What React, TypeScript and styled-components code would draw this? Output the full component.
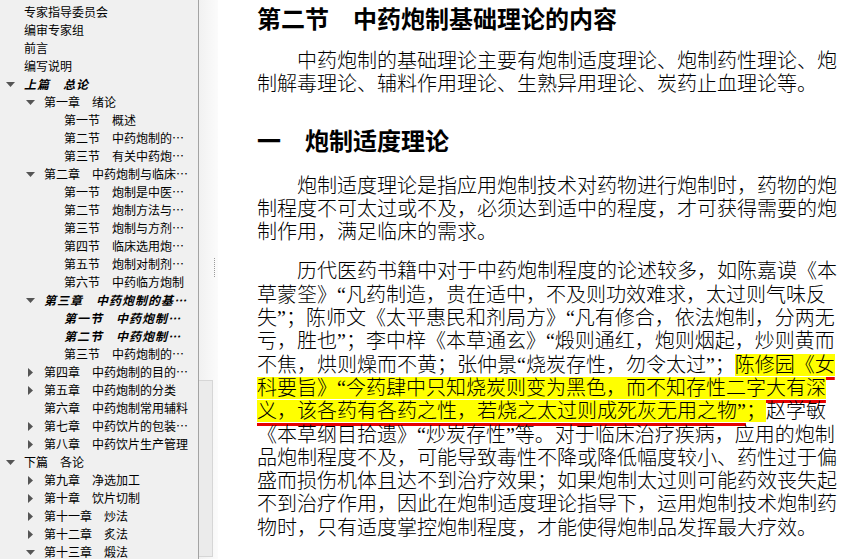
import React from 'react';
import styled, { createGlobalStyle } from 'styled-components';

const GlobalStyle = createGlobalStyle`
  html, body {
    margin: 0;
    padding: 0;
    background: #fff;
  }
  body {
    overflow: hidden;
  }
`;

type TocNode = {
  level: number;
  label: string;
  arrow?: 'open' | 'closed';
  current?: boolean;
};

const toc: TocNode[] = [
  { level: 0, label: '专家指导委员会' },
  { level: 0, label: '编审专家组' },
  { level: 0, label: '前言' },
  { level: 0, label: '编写说明' },
  { level: 0, label: '上篇　总论', arrow: 'open', current: true },
  { level: 1, label: '第一章　绪论', arrow: 'open' },
  { level: 2, label: '第一节　概述' },
  { level: 2, label: '第二节　中药炮制的…' },
  { level: 2, label: '第三节　有关中药炮…' },
  { level: 1, label: '第二章　中药炮制与临床…', arrow: 'open' },
  { level: 2, label: '第一节　炮制是中医…' },
  { level: 2, label: '第二节　炮制方法与…' },
  { level: 2, label: '第三节　炮制与方剂…' },
  { level: 2, label: '第四节　临床选用炮…' },
  { level: 2, label: '第五节　炮制对制剂…' },
  { level: 2, label: '第六节　中药临方炮制' },
  { level: 1, label: '第三章　中药炮制的基…', arrow: 'open', current: true },
  { level: 2, label: '第一节　中药炮制…', current: true },
  { level: 2, label: '第二节　中药炮制…', current: true },
  { level: 2, label: '第三节　中药炮制的…' },
  { level: 1, label: '第四章　中药炮制的目的…', arrow: 'closed' },
  { level: 1, label: '第五章　中药炮制的分类', arrow: 'closed' },
  { level: 1, label: '第六章　中药炮制常用辅料' },
  { level: 1, label: '第七章　中药饮片的包装…', arrow: 'closed' },
  { level: 1, label: '第八章　中药饮片生产管理', arrow: 'closed' },
  { level: 0, label: '下篇　各论', arrow: 'open' },
  { level: 1, label: '第九章　净选加工', arrow: 'closed' },
  { level: 1, label: '第十章　饮片切制', arrow: 'closed' },
  { level: 1, label: '第十一章　炒法', arrow: 'closed' },
  { level: 1, label: '第十二章　炙法', arrow: 'closed' },
  { level: 1, label: '第十三章　煅法', arrow: 'open' },
];

const Arrow = ({ kind }: { kind: 'open' | 'closed' }) =>
  kind === 'open' ? (
    <svg width="9" height="5" viewBox="0 0 9 5">
      <polygon points="0,0 9,0 4.5,5" fill="#555" />
    </svg>
  ) : (
    <svg width="5" height="9" viewBox="0 0 5 9">
      <polygon points="0,0 5,4.5 0,9" fill="#555" />
    </svg>
  );

const App = () => {
  return (
    <Shell>
      <GlobalStyle />
      <Sidebar>
        {toc.map((node, i) => (
          <TreeRow key={i} $level={node.level}>
            <Twisty>{node.arrow && <Arrow kind={node.arrow} />}</Twisty>
            <Label $current={node.current}>{node.label}</Label>
          </TreeRow>
        ))}
      </Sidebar>
      <Splitter>
        <Grip />
        <Thumb />
      </Splitter>
      <Page>
        <Title>第二节　中药炮制基础理论的内容</Title>
        <Paragraph $gap={15}>
          中药炮制的基础理论主要有炮制适度理论、炮制药性理论、炮制解毒理论、辅料作用理论、生熟异用理论、炭药止血理论等。
        </Paragraph>
        <Heading>一　炮制适度理论</Heading>
        <Paragraph $gap={20}>
          炮制适度理论是指应用炮制技术对药物进行炮制时，药物的炮制程度不可太过或不及，必须达到适中的程度，才可获得需要的炮制作用，满足临床的需求。
        </Paragraph>
        <Paragraph $gap={16}>
          历代医药书籍中对于中药炮制程度的论述较多，如陈嘉谟《本草蒙筌》“凡药制造，贵在适中，不及则功效难求，太过则气味反失”；陈师文《太平惠民和剂局方》“凡有修合，依法炮制，分两无亏，胜也”；李中梓《本草通玄》“煅则通红，炮则烟起，炒则黄而不焦，烘则燥而不黄；张仲景“烧炭存性，勿令太过”；
          <Highlight>
            <RedLine>陈修园《女科要旨》“今药肆中只知烧炭则变为黑色，而不知存性二字大有深义，该各药有各药之性，若烧之太过则成死灰无用之物”</RedLine>；
          </Highlight>
          赵学敏《本草纲目拾遗》“炒炭存性”等。对于临床治疗疾病，应用的炮制品炮制程度不及，可能导致毒性不降或降低幅度较小、药性过于偏盛而损伤机体且达不到治疗效果；如果炮制太过则可能药效丧失起不到治疗作用，因此在炮制适度理论指导下，运用炮制技术炮制药物时，只有适度掌控炮制程度，才能使得炮制品发挥最大疗效。
        </Paragraph>
      </Page>
    </Shell>
  );
};

const Shell = styled.div`
  display: flex;
  width: 850px;
  height: 559px;
  overflow: hidden;
`;

const Sidebar = styled.nav`
  flex: 0 0 198px;
  padding-top: 3px;
  background: #f0f0f0;
  border-right: 1px solid #a3a3a3;
  font-family: "Noto Sans CJK SC", sans-serif;
  font-size: 12px;
  color: #000;
  overflow: hidden;
`;

const TreeRow = styled.div<{ $level: number }>`
  display: flex;
  align-items: center;
  height: 18px;
  padding-left: ${({ $level }) => $level * 20}px;
  white-space: nowrap;
`;

const Twisty = styled.span`
  display: flex;
  align-items: center;
  justify-content: center;
  flex: 0 0 20px;
  height: 18px;
`;

const Label = styled.span<{ $current?: boolean }>`
  margin-left: 4px;
  line-height: 18px;
  font-weight: ${({ $current }) => ($current ? 700 : 400)};
  font-style: ${({ $current }) => ($current ? 'italic' : 'normal')};
  letter-spacing: ${({ $current }) => ($current ? '1px' : '0')};
`;

const Splitter = styled.div`
  flex: 0 0 19px;
  display: flex;
  flex-direction: column;
  background: linear-gradient(to right, #f1f1f1, #fbfbfb);
`;

const Grip = styled.div`
  align-self: flex-end;
  margin: 258px 3px 0 0;
  height: 19px;
  border-left: 1px dotted #9a9a9a;
`;

const Thumb = styled.div`
  margin-top: auto;
  margin-bottom: 2px;
  width: 13px;
  height: 175px;
  background: #ebebeb;
  border: 1px solid #d6d6d6;
  border-left: none;
`;

const Page = styled.main`
  flex: 1;
  padding: 0 0 0 39px;
  background: #fff;
  color: #000;
  font-family: "Liberation Serif", "Noto Sans CJK SC", serif;
  overflow: hidden;
`;

const Title = styled.h1`
  margin: 0;
  font-family: "Noto Sans CJK SC", sans-serif;
  font-size: 24px;
  line-height: normal;
  font-weight: 700;
`;

const Heading = styled.h2`
  margin: 28px 0 0;
  font-family: "Noto Sans CJK SC", sans-serif;
  font-size: 24px;
  line-height: 30px;
  font-weight: 700;
`;

const Paragraph = styled.p<{ $gap: number }>`
  width: 585px;
  margin: ${({ $gap }) => $gap}px 0 0;
  font-size: 20px;
  font-weight: 300;
  line-height: 23.3px;
  text-indent: 2em;
  text-align: left;
  text-spacing-trim: space-all;
  font-kerning: none;
`;

const Highlight = styled.mark`
  background: #ffff00;
  color: inherit;
`;

const RedLine = styled.span`
  text-decoration: underline;
  text-decoration-color: #e60000;
  text-decoration-thickness: 3px;
  text-underline-offset: 5px;
  text-decoration-skip-ink: none;
`;

export default App;
